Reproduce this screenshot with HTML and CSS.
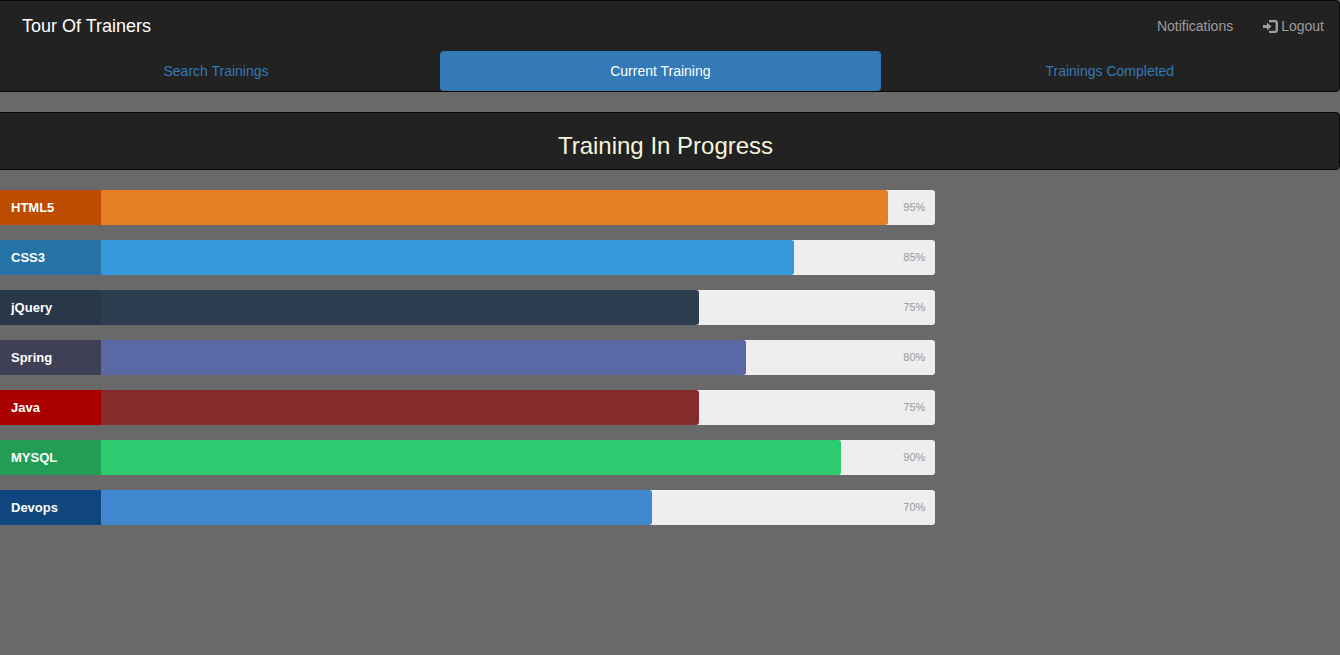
FILE: index.html
```html
<!DOCTYPE html>
<html lang="en">
<head>
<meta charset="utf-8">
<title>Tour Of Trainers</title>
<link rel="stylesheet" href="styles.css">
</head>
<body>
<div class="page">
  <header class="navbar">
    <div class="navbar-top">
      <a class="brand" href="#">Tour Of Trainers</a>
      <nav class="navbar-links">
        <a href="#">Notifications</a>
        <a href="#"><svg class="icon" viewBox="0 0 15 13" aria-hidden="true"><path fill="currentColor" d="M6 0h6a3 3 0 0 1 3 3v7a3 3 0 0 1-3 3H6v-2.200h5.600a1 1 0 0 0 1-1V3.200a1 1 0 0 0-1-1H6zM0 5h4V2.400L8.500 6.500 4 10.600V8H0z"/></svg>Logout</a>
      </nav>
    </div>
    <nav class="tabs">
      <a class="tab tab-search" href="#">Search Trainings</a>
      <a class="tab tab-current active" href="#" aria-current="page">Current Training</a>
      <a class="tab tab-completed" href="#">Trainings Completed</a>
    </nav>
  </header>
  <main>
    <div class="navbar heading"><h3>Training In Progress</h3></div>
    <div class="skills">
      <div class="skillbar html5"><div class="fill" style="width:95%"></div><div class="title">HTML5</div><div class="percent">95%</div></div>
      <div class="skillbar css3"><div class="fill" style="width:85%"></div><div class="title">CSS3</div><div class="percent">85%</div></div>
      <div class="skillbar jquery"><div class="fill" style="width:75%"></div><div class="title">jQuery</div><div class="percent">75%</div></div>
      <div class="skillbar spring"><div class="fill" style="width:80%"></div><div class="title">Spring</div><div class="percent">80%</div></div>
      <div class="skillbar java"><div class="fill" style="width:75%"></div><div class="title">Java</div><div class="percent">75%</div></div>
      <div class="skillbar mysql"><div class="fill" style="width:90%"></div><div class="title">MYSQL</div><div class="percent">90%</div></div>
      <div class="skillbar devops"><div class="fill" style="width:70%"></div><div class="title">Devops</div><div class="percent">70%</div></div>
    </div>
  </main>
</div>
</body>
</html>
```
FILE: styles.css
```css
* { box-sizing: border-box; }

body {
  margin: 0;
  overflow-x: hidden;
  background: #696969;
  font: 14px/20px "Liberation Sans", Arial, sans-serif;
}

a { text-decoration: none; }

.page { margin-left: -9px; }

.navbar {
  margin-bottom: 20px;
  border: 1px solid #080808;
  border-radius: 4px;
  background: #222;
}

.navbar-top {
  display: flex;
  justify-content: space-between;
  align-items: center;
  height: 50px;
  padding: 0 15px 0 30px;
}

.brand { color: #fff; font-size: 18px; }

.navbar-links { display: flex; gap: 30px; }
.navbar-links a { display: flex; align-items: center; gap: 3px; color: #9d9d9d; }
.icon { width: 15px; height: 13px; }

.tabs { display: flex; }

.tab {
  flex: 448 1 0;
  padding: 10px 15px;
  border-radius: 4px;
  color: #337ab7;
  text-align: center;
}
.tab-current { flex-grow: 440; }
.tab-completed { flex-grow: 459; }
.tab.active { background: #337ab7; color: #fff; }

.heading h3 {
  margin: 20px 0 10px;
  color: #f5f5dc;
  font-size: 24px;
  font-weight: 400;
  line-height: 26px;
  text-align: center;
}
.heading { display: flow-root; }

.skills { display: grid; gap: 15px; width: 70%; }

.skillbar {
  display: grid;
  grid-template-columns: 110px 1fr;
  height: 35px;
  border-radius: 3px;
  background: #eee;
  line-height: 35px;
}
.fill {
  grid-area: 1 / 1 / 2 / 3;
  border-radius: 3px;
  background: var(--bar);
}
.title {
  grid-area: 1 / 1;
  padding-left: 20px;
  border-radius: 3px 0 0 3px;
  background: var(--label);
  color: #fff;
  font-size: 13px;
  font-weight: 700;
}
.percent {
  grid-area: 1 / 2;
  padding-right: 10px;
  color: #999;
  font-size: 11px;
  text-align: right;
}

.html5 { --label: #be4c00; --bar: #e67e22; }
.css3 { --label: #2573a6; --bar: #3498db; }
.jquery { --label: #283848; --bar: #2c3e50; }
.spring { --label: #3f3f55; --bar: #5a68a5; }
.java { --label: #aa0000; --bar: #852d2d; }
.mysql { --label: #239d56; --bar: #2ecc71; }
.devops { --label: #10467e; --bar: #4288d0; }
```
